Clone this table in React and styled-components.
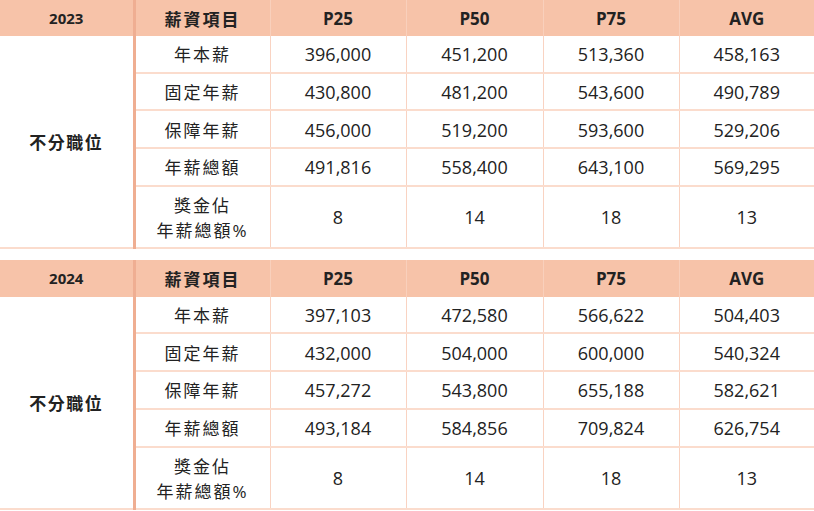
import React from "react"
import styled, { createGlobalStyle } from "styled-components"

const GlobalStyle = createGlobalStyle`
  html, body {
    margin: 0;
    padding: 0;
    background: #ffffff;
  }
  body {
    font-family: "Open Sans", "Noto Sans CJK TC", sans-serif;
    color: #222;
  }
`

const data = [
  {
    year: "2023",
    rows: [
      ["年本薪", "396,000", "451,200", "513,360", "458,163"],
      ["固定年薪", "430,800", "481,200", "543,600", "490,789"],
      ["保障年薪", "456,000", "519,200", "593,600", "529,206"],
      ["年薪總額", "491,816", "558,400", "643,100", "569,295"],
    ],
    bonus: ["8", "14", "18", "13"],
  },
  {
    year: "2024",
    rows: [
      ["年本薪", "397,103", "472,580", "566,622", "504,403"],
      ["固定年薪", "432,000", "504,000", "600,000", "540,324"],
      ["保障年薪", "457,272", "543,800", "655,188", "582,621"],
      ["年薪總額", "493,184", "584,856", "709,824", "626,754"],
    ],
    bonus: ["8", "14", "18", "13"],
  },
]

const SalaryTable = ({ year, rows, bonus, first }) => (
  <Table>
    <colgroup>
      <col style={{ width: 134 }} />
      <col style={{ width: 136 }} />
      <col style={{ width: 136 }} />
      <col style={{ width: 137 }} />
      <col style={{ width: 136 }} />
      <col style={{ width: 135 }} />
    </colgroup>
    <thead>
      <tr>
        <YearHead $first={first}>{year}</YearHead>
        <Head $first={first} $cjk>
          薪資項目
        </Head>
        <Head $first={first}>P25</Head>
        <Head $first={first}>P50</Head>
        <Head $first={first}>P75</Head>
        <Head $first={first}>AVG</Head>
      </tr>
    </thead>
    <tbody>
      {rows.map((row, i) => (
        <tr key={row[0]}>
          {i === 0 && <Role rowSpan={5}>不分職位</Role>}
          {row.map((cell, j) => (
            <Cell key={j} $cjk={j === 0}>
              {cell}
            </Cell>
          ))}
        </tr>
      ))}
      <BonusRow>
        <Cell $cjk>
          獎金佔
          <br />
          年薪總額%
        </Cell>
        {bonus.map((v, j) => (
          <Cell key={j}>{v}</Cell>
        ))}
      </BonusRow>
    </tbody>
  </Table>
)

const App = () => (
  <>
    <GlobalStyle />
    <Page>
      {data.map((t, i) => (
        <SalaryTable key={t.year} first={i === 0} {...t} />
      ))}
    </Page>
  </>
)

const Page = styled.div`
  width: 814px;
  display: flex;
  flex-direction: column;
  gap: 11px;
`

const Table = styled.table`
  width: 814px;
  border-collapse: collapse;
  table-layout: fixed;
`

const Head = styled.th`
  height: ${(p) => (p.$first ? "36px" : "37px")};
  padding: 0;
  background: #f7c3a9;
  font-size: 17px;
  letter-spacing: ${(p) => (p.$cjk ? "2px" : "0")};
  font-weight: 700;
  color: #222;
  text-align: center;
  border-left: 1px solid #f9d0bc;
`

const YearHead = styled(Head)`
  font-size: 15px;
  border-left: none;
  border-right: 3px solid #efae92;
`

const Cell = styled.td`
  height: 33.7px;
  padding: 2px 0 0;
  font-size: ${(p) => (p.$cjk ? "17px" : "18px")};
  letter-spacing: ${(p) => (p.$cjk ? "2px" : "0")};
  text-align: center;
  color: #222;
  border-left: 1px solid #f9d3c2;
  border-bottom: 2px solid #fbdccd;
  line-height: 25px;
`

const Role = styled.td`
  padding: 0;
  font-size: 17px;
  letter-spacing: 1.5px;
  font-weight: 700;
  text-align: center;
  border-right: 3px solid #efae92;
  border-bottom: 2px solid #fbdccd;
`

const BonusRow = styled.tr`
  td {
    height: 58px;
  }
`

export default App
